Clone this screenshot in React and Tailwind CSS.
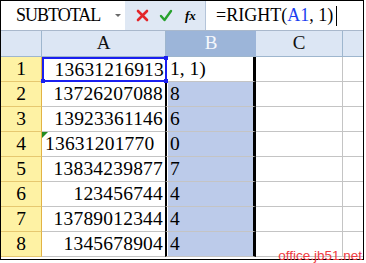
import React from 'react'

const rows = [
  { n: 1, a: '13631216913', b: '1, 1)' },
  { n: 2, a: '13726207088', b: '8' },
  { n: 3, a: '13923361146', b: '6' },
  { n: 4, a: '13631201770', b: '0', text: true },
  { n: 5, a: '13834239877', b: '7' },
  { n: 6, a: '123456744', b: '4' },
  { n: 7, a: '13789012344', b: '4' },
  { n: 8, a: '1345678904', b: '4' },
]

const serif = { fontFamily: '"Liberation Serif", "Noto Sans CJK SC", serif' }

const FormulaBar = () => (
  <div className="flex h-[30px] border-b border-[#a9b8cc] bg-white">
    {/* name box */}
    <div className="flex w-[124px] items-center">
      <span className="ml-[15px] text-[18px] tracking-[-1px] text-black" style={serif}>SUBTOTAL</span>
      <span className="ml-auto mr-[4px] h-0 w-0 border-x-[3px] border-t-[3px] border-x-transparent border-t-[#6a6a6a]" />
    </div>
    {/* buttons */}
    <div className="flex w-[81px] items-center border-r border-[#b4c4d9] bg-[#dfe8f4] pl-[11px]">
      <svg width="13" height="13" viewBox="0 0 13 13">
        <path d="M2 2 L11 11 M11 2 L2 11" stroke="#e3262a" strokeWidth="2.6" strokeLinecap="round" />
      </svg>
      <svg width="14" height="13" viewBox="0 0 14 13" className="ml-[10px]">
        <path d="M2 7 L5.5 11 L12 2" stroke="#27a12d" strokeWidth="2.4" fill="none" strokeLinecap="round" strokeLinejoin="round" />
      </svg>
      <span className="ml-[12px] text-[13px] font-bold italic text-black" style={serif}>fx</span>
    </div>
    {/* formula */}
    <div className="flex flex-1 items-center pl-[10px] text-[18px] text-black" style={serif}>
      <span>=RIGHT(</span>
      <span className="text-[#1c3ff0]">A1</span>
      <span>,&nbsp;1)</span>
      <span className="ml-[3px] h-[20px] w-px bg-black" />
    </div>
  </div>
)

const HeaderRow = () => (
  <div className="flex h-[26px] border-b border-[#9eb6ce] text-[19px]" style={serif}>
    <div className="w-[41px] border-r border-[#9eb6ce] bg-[#dce6f4]" />
    <div className="flex w-[124px] items-center justify-center border-r border-[#9eb6ce] bg-[#dce6f4] text-[#111]">A</div>
    <div className="flex w-[90px] items-center justify-center bg-[#9cb5d9] text-[#f4f7fc]">B</div>
    <div className="flex w-[87px] items-center justify-center border-r border-[#9eb6ce] bg-[#dce6f4] text-[#111]">C</div>
    <div className="flex-1 bg-[#dce6f4]" />
  </div>
)

const Row = ({ r }) => {
  const first = r.n === 1
  return (
    <div className="flex h-[25px] text-[19.5px] text-black" style={serif}>
      <div className="flex w-[41px] items-center justify-center border-r border-b border-r-[#e2b345] border-b-[#e6c870] bg-[#fef2a4]">
        {r.n}
      </div>
      {first ? (
        <div className="relative flex w-[125px] items-center justify-end border-2 border-[#1a1ff0] pr-[1px] tracking-[0.2px]">
          {r.a}
          <span className="absolute -bottom-[3px] -left-[3px] h-[4px] w-[4px] bg-[#1a1ff0]" />
          <span className="absolute -bottom-[3px] -right-[3px] h-[4px] w-[4px] bg-[#1a1ff0]" />
          <span className="absolute -top-[3px] -right-[3px] h-[4px] w-[4px] bg-[#1a1ff0]" />
        </div>
      ) : (
        <div className={`relative flex w-[123px] items-center border-b border-[#c4c4c4] tracking-[0.2px] ${r.text ? 'justify-start pl-[3px]' : 'justify-end pr-[2px]'}`}>
          {r.text && (
            <span className="absolute left-0 top-0 h-0 w-0 border-r-[6px] border-t-[6px] border-r-transparent border-t-[#228b22]" />
          )}
          {r.a}
        </div>
      )}
      {first ? (
        <div className="flex w-[89px] items-center border-b border-r-[3px] border-b-[#c4c4c4] border-r-black pl-[3px]">
          {r.b}
        </div>
      ) : (
        <div className="flex w-[91px] border-b border-l-2 border-r-[3px] border-b-[#c4c4c4] border-l-black border-r-black bg-white pl-px">
          <div className="flex flex-1 items-center bg-[#bccbea] pl-[2px]">{r.b}</div>
        </div>
      )}
      <div className="w-[87px] border-r border-b border-[#c4c4c4]" />
      <div className="flex-1 border-b border-[#c4c4c4]" />
    </div>
  )
}

export default function App() {
  return (
    <div className="relative h-[263px] w-[366px] bg-white">
      <div className="h-[260px] w-[364px] overflow-hidden border border-black">
        <FormulaBar />
        <HeaderRow />
        {rows.map((r) => (
          <Row key={r.n} r={r} />
        ))}
      </div>
      <span
        className="absolute bottom-[1px] right-[4px] text-[13.5px] leading-none text-[#ee3a3f]"
        style={{ fontFamily: '"Liberation Sans", Arial, sans-serif' }}
      >
        office.jb51.net
      </span>
    </div>
  )
}
